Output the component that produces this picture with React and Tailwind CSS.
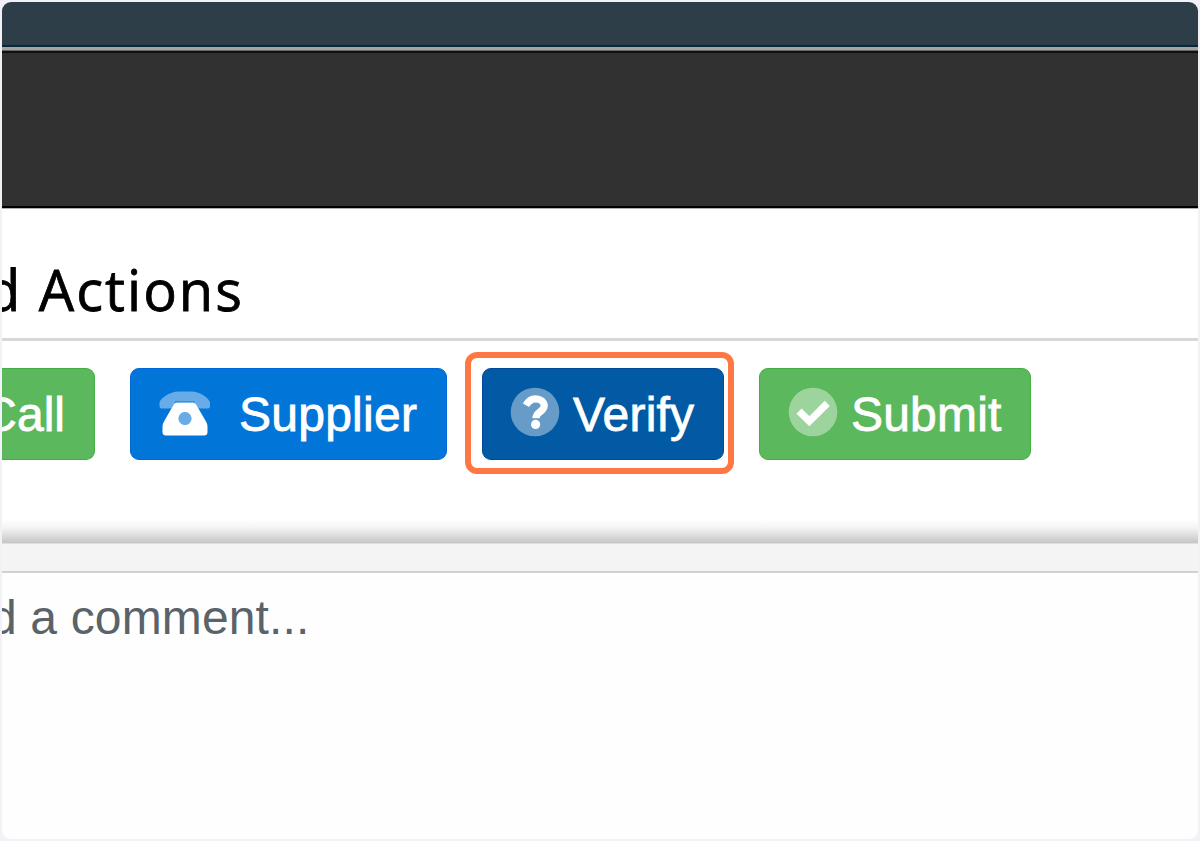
import { clsx } from 'clsx'

function PhoneIcon() {
  return (
    <svg width="52" height="46" viewBox="0 0 52 46" className="shrink-0">
      <path
        d="M0.5 15V11.5C1 8 10 0.5 20 0.5H32C42 0.5 50.5 8 51 11.5V15Q51 17.5 49 17.5H40.5Q39 17.5 38.2 16L35 10.5H16.5L13.3 16Q12.5 17.5 11 17.5H2.5Q0.5 17.5 0.5 15Z"
        fill="#fff"
        fillOpacity="0.4"
      />
      <path
        fillRule="evenodd"
        d="M18 11.5H34Q35.8 11.5 36.8 13L47 30.5Q48.5 33 48.5 35.5V41Q48.5 44.5 45 44.5H7Q3.5 44.5 3.5 41V35.5Q3.5 33 5 30.5L15 13Q16 11.5 18 11.5ZM26 21A6.5 6.5 0 1 0 26 34A6.5 6.5 0 1 0 26 21Z"
        fill="#fff"
      />
      <circle cx="26" cy="27.5" r="6.5" fill="#fff" fillOpacity="0.4" />
    </svg>
  )
}

function QuestionIcon() {
  return (
    <svg width="50" height="50" viewBox="0 0 50 50" className="mb-[3px] shrink-0">
      <circle cx="25" cy="25" r="24.3" fill="#fff" fillOpacity="0.4" />
      <path
        d="M16 18.3C18.3 14 21.4 11.8 25.6 11.8C30.4 11.8 34.2 14.8 34.2 18.8C34.2 25 26 24.4 26 31.3"
        fill="none"
        stroke="#fff"
        strokeWidth="7.2"
      />
      <circle cx="25.6" cy="37.4" r="4.6" fill="#fff" />
    </svg>
  )
}

function CheckIcon() {
  return (
    <svg width="50" height="50" viewBox="0 0 50 50" className="mb-[3px] shrink-0">
      <circle cx="25" cy="25" r="24.3" fill="#fff" fillOpacity="0.4" />
      <path d="M11 24.2L21.3 34.2L39.3 16.4" fill="none" stroke="#fff" strokeWidth="7.2" />
    </svg>
  )
}

function ActionButton({ icon, label, className, labelClassName }) {
  return (
    <button
      className={clsx(
        'flex h-[92px] shrink-0 items-center rounded-[9px] border pb-px text-[48px] leading-none text-white',
        className
      )}
    >
      {icon}
      <span
        className={clsx(
          'whitespace-nowrap pt-[2px] [-webkit-text-stroke:0.8px_white]',
          labelClassName
        )}
      >
        {label}
      </span>
    </button>
  )
}

export default function App() {
  return (
    <div className="h-[841px] w-[1200px] bg-[#f2f1f8] p-[2px] font-['Liberation_Sans',Arial,sans-serif]">
      <div className="flex h-full flex-col overflow-hidden rounded-[9px] bg-white">
        <div className="h-[45px] shrink-0 border-b-2 border-[#04293b] bg-[#2d3e48]" />
        <div className="h-[4px] shrink-0 border-b border-[#656565] bg-[#a3a3a3]" />
        <div className="h-[157px] shrink-0 border-y-2 border-t-[#101010] border-b-black bg-[#313131]" />
        <div className="h-px shrink-0 bg-[#b0b0b0]" />

        <div className="flex h-[132px] shrink-0 items-center border-b-[3px] border-[#d8d8d8]">
          <h2 className="-ml-[16px] whitespace-pre pt-[30px] font-['Open_Sans','Noto_Sans',sans-serif] text-[56px] leading-[76px] tracking-[2px] text-black [-webkit-text-stroke:0.8px_black]">
            d Actions
          </h2>
        </div>

        <div className="flex h-[202px] shrink-0 items-start bg-[linear-gradient(to_bottom,#fff_0,#fff_178px,#f6f6f6_186px,#c6c6c6_202px)] pt-[27px]">
          <ActionButton
            label="Call"
            className="w-[93px] justify-end rounded-l-none border-l-0 border-[#43ae43] bg-[#5cb85c] pr-[29px]"
          />
          <ActionButton
            icon={<PhoneIcon />}
            label="Supplier"
            className="ml-[35px] w-[317px] border-[#0069d9] bg-[#0275d8] pl-[28px]"
            labelClassName="ml-[28px] tracking-[0.25px]"
          />
          <div className="relative ml-[35px]">
            <ActionButton
              icon={<QuestionIcon />}
              label="Verify"
              className="w-[242px] border-[#004a9c] bg-[#025aa5] pl-[27px]"
              labelClassName="ml-[13px] tracking-[0.2px]"
            />
            <div className="absolute -top-[16px] -left-[17px] h-[122px] w-[269px] rounded-[12px] border-[6px] border-[#ff7742]" />
          </div>
          <ActionButton
            icon={<CheckIcon />}
            label="Submit"
            className="ml-[35px] w-[272px] border-[#43ae43] bg-[#5cb85c] pl-[28px]"
            labelClassName="ml-[13px] tracking-[0.2px]"
          />
        </div>

        <div className="h-[30px] shrink-0 border-t border-b-2 border-t-[#dedede] border-b-[#d0d0d0] bg-[#f4f4f4]" />
        <div className="flex-1 bg-[#fefefe] pt-[17px]">
          <p className="-ml-[12px] whitespace-pre text-[48px] leading-[56px] tracking-[0.15px] text-[#596369]">
            d a comment...
          </p>
        </div>
      </div>
    </div>
  )
}
